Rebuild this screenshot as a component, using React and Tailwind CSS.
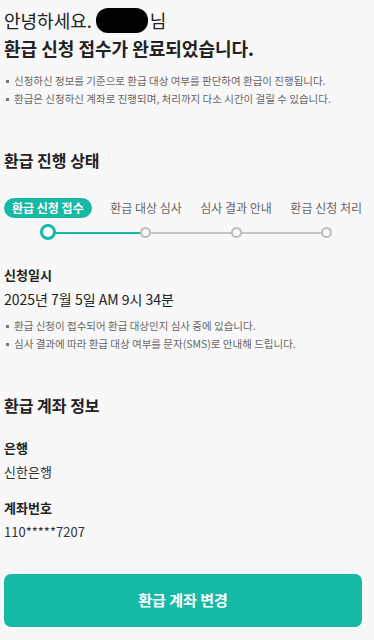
import React from 'react';

const font = { fontFamily: '"Noto Sans CJK KR", "Noto Sans", sans-serif' };

const steps = ['환급 신청 접수', '환급 대상 심사', '심사 결과 안내', '환급 신청 처리'];

function Bullets({ items }) {
  return (
    <ul className="flex flex-col text-[10.5px] leading-[18px] text-[#666]">
      {items.map((t) => (
        <li key={t} className="flex items-center gap-[5px]">
          <span className="w-[3px] h-[3px] bg-[#777] shrink-0 ml-[2px]"></span>
          <span>{t}</span>
        </li>
      ))}
    </ul>
  );
}

function StepBar() {
  return (
    <div className="relative mt-[26px]">
      {/* connector lines */}
      <div className="absolute left-[47px] right-[36px] top-[34px] h-[2px] bg-[#c4c4c4]"></div>
      <div className="absolute left-[47px] w-[99px] top-[34px] h-[2px] bg-[#16b8a6]"></div>
      <div className="relative flex justify-between">
        {steps.map((s, i) => (
          <div key={s} className="flex flex-col items-center">
            {i === 0 ? (
              <span className="h-[20px] px-[8px] rounded-full bg-[#16b8a6] text-white text-[12px] font-bold flex items-center">
                {s}
              </span>
            ) : (
              <span className="h-[20px] text-[12px] text-[#666] flex items-center">{s}</span>
            )}
            <div className="h-[30px] flex items-center mt-[-1px]">
              {i === 0 ? (
                <span className="w-[16px] h-[16px] rounded-full border-[3px] border-[#16b8a6] bg-white"></span>
              ) : (
                <span className="w-[11px] h-[11px] rounded-full border-2 border-[#bdbdbd] bg-[#f8f8f8]"></span>
              )}
            </div>
          </div>
        ))}
      </div>
    </div>
  );
}

export default function App() {
  return (
    <div className="min-h-[640px] bg-[#f8f8f8] text-[#222] pl-[4px] pr-[12px] pt-[6px]" style={font}>
      <h1 className="text-[18px] leading-[28px] font-normal flex items-center">
        안녕하세요.
        <span className="inline-block w-[52px] h-[25px] rounded-[12px] bg-black ml-[4px] mr-[2px]"></span>
        님
      </h1>
      <h2 className="text-[18px] leading-[28px] font-bold">환급 신청 접수가 완료되었습니다.</h2>

      <div className="mt-[10px]">
        <Bullets
          items={[
            '신청하신 정보를 기준으로 환급 대상 여부를 판단하여 환급이 진행됩니다.',
            '환급은 신청하신 계좌로 진행되며, 처리까지 다소 시간이 걸릴 수 있습니다.',
          ]}
        />
      </div>

      <h3 className="mt-[40px] text-[16px] leading-[24px] font-bold">환급 진행 상태</h3>
      <StepBar />

      <div className="mt-[17px]">
        <p className="text-[13px] leading-[22px] font-bold">신청일시</p>
        <p className="mt-[2px] text-[14px] leading-[22px]">2025년 7월 5일 AM 9시 34분</p>
      </div>

      <div className="mt-[7px]">
        <Bullets
          items={[
            '환급 신청이 접수되어 환급 대상인지 심사 중에 있습니다.',
            '심사 결과에 따라 환급 대상 여부를 문자(SMS)로 안내해 드립니다.',
          ]}
        />
      </div>

      <h3 className="mt-[40px] text-[16px] leading-[24px] font-bold">환급 계좌 정보</h3>

      <div className="mt-[19px]">
        <p className="text-[13px] leading-[24px] font-bold">은행</p>
        <p className="text-[13px] leading-[24px] text-[#333]">신한은행</p>
      </div>
      <div className="mt-[12px]">
        <p className="text-[13px] leading-[24px] font-bold">계좌번호</p>
        <p className="text-[13px] leading-[24px] text-[#333]">110*****7207</p>
      </div>

      <button className="mt-[30px] w-full h-[53px] rounded-[7px] bg-[#16b8a6] text-white text-[15px] font-bold">
        환급 계좌 변경
      </button>
    </div>
  );
}
